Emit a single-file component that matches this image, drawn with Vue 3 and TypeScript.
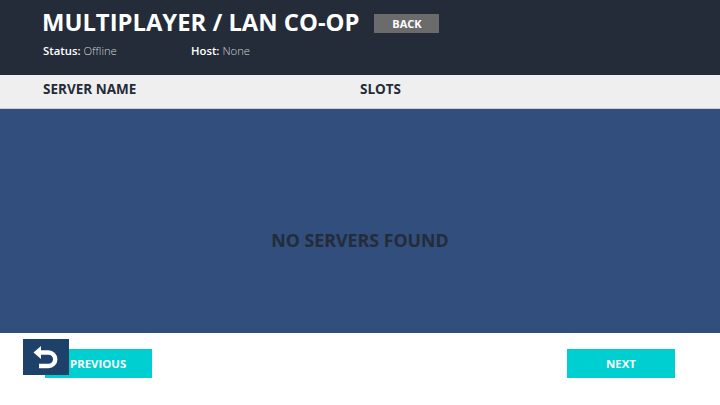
<template>
  <div class="screen">
    <header class="top">
      <div class="title-row">
        <h1>MULTIPLAYER / LAN CO-OP</h1>
        <button class="back">BACK</button>
      </div>
      <div class="info">
        <span class="info-item status"><b>Status:</b> Offline</span>
        <span class="info-item"><b>Host:</b> None</span>
      </div>
    </header>

    <div class="columns">
      <span class="col-name">SERVER NAME</span>
      <span>SLOTS</span>
    </div>

    <main class="list">
      <p>NO SERVERS FOUND</p>
    </main>

    <footer class="bottom">
      <div class="prev-wrap">
        <button class="nav prev">PREVIOUS</button>
        <div class="return">
          <svg width="46" height="36" viewBox="0 0 46 36">
            <path d="M17 13.5H25.5A6.75 6.75 0 0 1 25.5 27H16" fill="none" stroke="#fff" stroke-width="4.4" />
            <path d="M18 7V20L10.5 13.5Z" fill="#fff" />
          </svg>
        </div>
      </div>
      <button class="nav next">NEXT</button>
    </footer>
  </div>
</template>

<script setup lang="ts">
</script>

<style>
html,
body {
  margin: 0;
  background: #fff;
}
</style>

<style scoped>
.screen {
  width: 720px;
  height: 405px;
  overflow: hidden;
  display: flex;
  flex-direction: column;
  font-family: "Open Sans", sans-serif;
}

.top {
  height: 75px;
  flex: none;
  box-sizing: border-box;
  background: #232c38;
  padding: 7px 0 0 43px;
  color: #fff;
}

.title-row {
  display: flex;
  align-items: flex-start;
  gap: 15px;
  height: 32px;
}

h1 {
  margin: 0 0 0 -1px;
  font-size: 23.8px;
  line-height: 31px;
  font-weight: 700;
}

button {
  border: 0;
  padding: 0;
  font-family: inherit;
  font-weight: 700;
  color: #fff;
}

.back {
  width: 65px;
  height: 19px;
  margin-top: 7px;
  background: #6b6b6b;
  font-size: 11px;
}

.info {
  display: flex;
  margin-top: 4px;
  font-size: 11.3px;
  line-height: 16px;
  font-weight: 300;
  color: #d0d3d6;
}

.info-item b {
  font-weight: 600;
  color: #fff;
}

.status {
  width: 148px;
}

.columns {
  height: 34px;
  flex: none;
  box-sizing: border-box;
  display: flex;
  align-items: center;
  padding: 0 0 5px 43px;
  background: #efefef;
  border-bottom: 1px solid #c9cfd8;
  font-size: 13.5px;
  font-weight: 700;
  color: #232c38;
}

.col-name {
  width: 317px;
}

.list {
  flex: 1;
  box-sizing: border-box;
  display: flex;
  align-items: center;
  justify-content: center;
  padding-top: 38px;
  background: #314e7c;
}

.list p {
  margin: 0;
  font-size: 17.8px;
  font-weight: 700;
  color: #232c38;
}

.bottom {
  height: 72px;
  flex: none;
  box-sizing: border-box;
  display: flex;
  justify-content: space-between;
  align-items: flex-start;
  padding: 16px 45px 0;
}

.nav {
  height: 29px;
  background: #00cfd1;
  font-size: 11.4px;
}

.next {
  width: 108px;
}

.prev-wrap {
  position: relative;
}

.prev {
  display: block;
  width: 107px;
  text-align: left;
  padding-left: 25px;
}

.return {
  position: absolute;
  left: -22px;
  top: -10px;
  width: 46px;
  height: 36px;
  background: #1d4168;
}

.return svg {
  display: block;
}
</style>
